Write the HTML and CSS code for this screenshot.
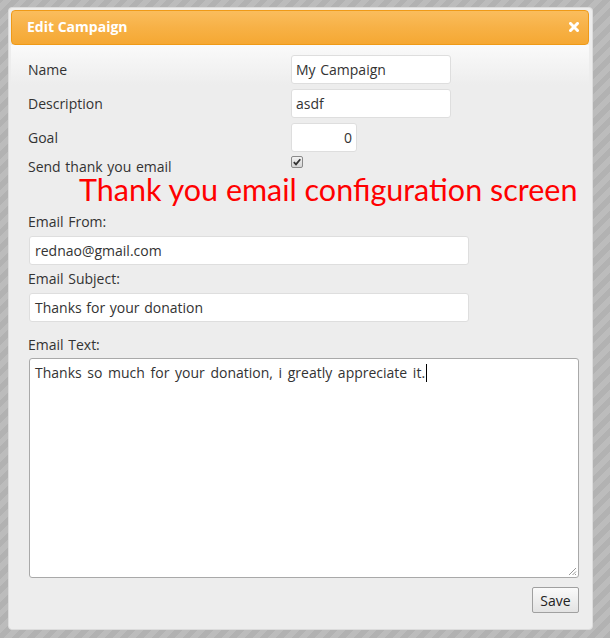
FILE: index.html
```html
<!DOCTYPE html>
<html>
<head>
<meta charset="utf-8">
<link rel="stylesheet" href="styles.css">
</head>
<body>
<div class="dialog">
  <div class="dialog-header">
    <span class="dialog-title">Edit Campaign</span>
    <svg class="dialog-close" width="10" height="10" viewBox="0 0 10 10"><path d="M1.5 1.5 L8.5 8.5 M8.5 1.5 L1.5 8.5" stroke="#fff" stroke-width="3" stroke-linecap="square"/></svg>
  </div>
  <div class="dialog-body">
    <div class="form-grid">
      <label class="row-label">Name</label>
      <div class="input input-wide">My Campaign</div>
      <label class="row-label">Description</label>
      <div class="input input-wide">asdf</div>
      <label class="row-label">Goal</label>
      <div class="input input-goal">0</div>
      <label class="row-label row-label-check">Send thank you email</label>
      <div class="check-cell"><span class="checkbox"><svg width="8" height="8" viewBox="0 0 8 8"><path d="M0.8 4.2 L3 6.4 L7.3 1.2" fill="none" stroke="#333" stroke-width="1.8"/></svg></span></div>
    </div>
    <div class="note">Thank you email configuration screen</div>
    <div class="field">
      <label class="field-label">Email From:</label>
      <div class="input input-long">rednao@gmail.com</div>
    </div>
    <div class="field">
      <label class="field-label">Email Subject:</label>
      <div class="input input-long">Thanks for your donation</div>
    </div>
    <div class="field field-text">
      <label class="field-label">Email Text:</label>
      <div class="textarea">Thanks so much for your donation, i greatly appreciate it.<span class="caret"></span>
        <svg class="grip" width="9" height="9" viewBox="0 0 9 9"><path d="M8 1 L1 8 M8 4.5 L4.5 8 M8 7 L7 8" stroke="#999" stroke-width="1"/></svg>
      </div>
    </div>
    <div class="footer">
      <button class="btn">Save</button>
    </div>
  </div>
</div>
</body>
</html>
```
FILE: styles.css
```css
html, body {
  margin: 0;
  padding: 0;
}
body {
  width: 610px;
  height: 638px;
  overflow: hidden;
  background: repeating-linear-gradient(-45deg, #b2b2b2 0px, #b2b2b2 5.5px, #bcbcbc 5.5px, #bcbcbc 11px);
  font-family: "Open Sans", "DejaVu Sans", sans-serif;
  font-size: 14px;
  word-spacing: 1px;
  color: #333;
}
.dialog {
  box-sizing: border-box;
  margin: 7px 0 0 8px;
  width: 585px;
  height: 623px;
  background: #ededed;
  border: 1px solid #dcdcdc;
  border-radius: 4px;
  padding: 2px 3px 0 2px;
  display: flex;
  flex-direction: column;
}
.dialog-header {
  height: 35px;
  box-sizing: border-box;
  border: 1px solid #ef9a17;
  border-radius: 4px;
  background: linear-gradient(#fabd5d, #f7b146 50%, #f5a833);
  display: flex;
  align-items: center;
  justify-content: space-between;
  padding: 0 9px 0 15px;
}
.dialog-title {
  color: #fff;
  font-weight: bold;
  font-size: 14px;
  word-spacing: 0;
  position: relative;
  top: -1px;
}
.dialog-close {
  display: block;
  position: relative;
  top: -1px;
}
.dialog-body {
  flex: 1;
  padding: 10px 0 0 18px;
  display: flex;
  flex-direction: column;
  background: linear-gradient(#fafafa, #ededed 40px);
}
.row-label, .field-label {
  margin-left: -1px;
}
.form-grid {
  display: grid;
  grid-template-columns: 262px auto;
  row-gap: 5px;
  align-items: center;
}
.input {
  box-sizing: border-box;
  background: #fff;
  border: 1px solid #dedede;
  border-radius: 3px;
  height: 29px;
  line-height: 27px;
  padding: 0 5px;
  font-size: 14px;
  color: #333;
  white-space: nowrap;
}
.input-wide {
  width: 160px;
  padding-left: 4px;
}
.input-goal {
  width: 66px;
  text-align: right;
  padding-right: 4px;
}
.row-label-check {
  align-self: start;
  line-height: 14px;
  margin-top: 3px;
}
.check-cell {
  align-self: start;
  height: 12px;
  display: flex;
  align-items: flex-start;
  margin-top: -1px;
}
.checkbox {
  box-sizing: border-box;
  width: 12px;
  height: 12px;
  border: 1px solid #8a8a8a;
  border-radius: 2px;
  background: linear-gradient(#f2f2f2, #d6d6d6);
  display: flex;
  align-items: center;
  justify-content: center;
}
.note {
  color: #ff0000;
  font-family: "Lato", "Open Sans", sans-serif;
  font-size: 30.5px;
  word-spacing: 0;
  line-height: 26px;
  margin: 2px 0 0 50px;
  white-space: nowrap;
}
.field {
  display: flex;
  flex-direction: column;
  align-items: flex-start;
}
.field-label {
  line-height: 18px;
  margin-bottom: 5px;
}
.note + .field .field-label {
  margin-top: 11px;
}
.input-long {
  width: 440px;
  margin-bottom: 5px;
}
.field-text {
  margin-top: 9px;
}
.field-text .field-label {
  margin-bottom: 4px;
}
.textarea {
  position: relative;
  box-sizing: border-box;
  width: 550px;
  height: 220px;
  background: #fff;
  border: 1px solid #a9a9a9;
  border-radius: 3px;
  padding: 5px 5px;
  font-size: 14px;
  word-spacing: 2px;
  line-height: 18px;
  color: #333;
}
.caret {
  display: inline-block;
  width: 1px;
  height: 18px;
  background: #000;
  vertical-align: top;
  margin-left: 1px;
}
.grip {
  position: absolute;
  right: 1px;
  bottom: 1px;
}
.footer {
  display: flex;
  justify-content: flex-end;
  width: 550px;
  margin-top: 9px;
}
.btn {
  display: block;
  box-sizing: border-box;
  width: 47px;
  height: 26px;
  border: 1px solid #a0a0a0;
  border-radius: 2px;
  background: linear-gradient(#fafafa, #e3e3e3);
  font-family: "Open Sans", sans-serif;
  font-size: 14px;
  color: #222;
  padding: 0;
}
```
